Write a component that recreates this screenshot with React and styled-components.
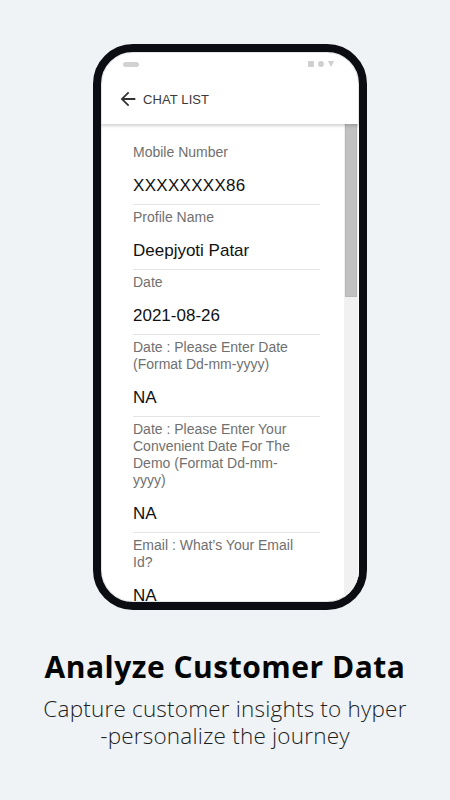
import React from 'react';
import styled, { createGlobalStyle } from 'styled-components';
import { MdArrowBack } from 'react-icons/md';

const fields = [
  { label: 'Mobile Number', value: 'XXXXXXXX86' },
  { label: 'Profile Name', value: 'Deepjyoti Patar' },
  { label: 'Date', value: '2021-08-26' },
  { label: 'Date : Please Enter Date (Format Dd-mm-yyyy)', value: 'NA' },
  { label: 'Date : Please Enter Your Convenient Date For The Demo (Format Dd-mm-yyyy)', value: 'NA' },
  { label: 'Email : What’s Your Email Id?', value: 'NA' },
];

const GlobalStyle = createGlobalStyle`
  html, body {
    margin: 0;
    padding: 0;
    background: #eff3f6;
  }
  body {
    font-family: 'Liberation Sans', Arial, sans-serif;
  }
`;

const Page = styled.div`
  width: 450px;
  height: 800px;
  display: flex;
  flex-direction: column;
  align-items: center;
  background: #eff3f6;
  overflow: hidden;
`;

const Phone = styled.div`
  margin-top: 44px;
  margin-left: 10px;
  width: 258px;
  height: 550px;
  border: 8px solid #0b0d12;
  border-radius: 40px;
  background: #fff;
  overflow: hidden;
  display: flex;
  flex-direction: column;
  box-shadow: inset 0 0 0 1px #e4e4e4;
`;

const StatusBar = styled.div`
  height: 24px;
  flex-shrink: 0;
  display: flex;
  align-items: center;
  justify-content: space-between;
  padding: 0 25px 0 22px;
`;

const Pill = styled.span`
  width: 16px;
  height: 5px;
  border-radius: 3px;
  background: #d2d2d2;
`;

const StatusIcons = styled.div`
  display: flex;
  align-items: center;
  gap: 4px;
`;

const Dot = styled.span`
  width: 6px;
  height: 6px;
  background: #d0d0d0;
  border-radius: ${p => (p.$round ? '50%' : '1px')};
`;

const Tri = styled.span`
  width: 0;
  height: 0;
  border-left: 3px solid transparent;
  border-right: 3px solid transparent;
  border-top: 6px solid #d0d0d0;
`;

const Toolbar = styled.div`
  height: 48px;
  flex-shrink: 0;
  display: flex;
  align-items: center;
  gap: 4px;
  padding-left: 16px;
  padding-bottom: 2px;
  box-sizing: border-box;
  color: #333;
  box-shadow: 0 2px 3px rgba(0, 0, 0, 0.18);
  position: relative;
  z-index: 1;
`;

const Title = styled.span`
  font-size: 13px;
  letter-spacing: 0.1px;
  color: #3a3a3a;
  padding-top: 1px;
`;

const Body = styled.div`
  flex: 1;
  display: flex;
  min-height: 0;
`;

const List = styled.div`
  flex: 1;
  overflow: hidden;
  padding: 16px 24px 0 32px;
`;

const Field = styled.div`
  padding: 4px 0 8px;
  border-bottom: 1px solid #e3e3e3;
`;

const Label = styled.div`
  font-size: 14px;
  line-height: 17px;
  color: #707070;
  padding-right: 14px;
`;

const Value = styled.div`
  margin-top: 15px;
  font-size: 17px;
  line-height: 20px;
  color: #111;
  letter-spacing: ${p => (p.$first ? '0.3px' : '0')};
`;

const Track = styled.div`
  width: 14px;
  flex-shrink: 0;
  background: #f1f1f1;
  border-right: 1px solid #fff;
`;

const Thumb = styled.div`
  height: 172px;
  margin: 0 1px;
  background: #c1c1c1;
  border: 1px solid #b7b7b7;
  border-top: none;
`;

const Caption = styled.div`
  margin-top: 39px;
  text-align: center;
  font-family: 'Open Sans', 'Liberation Sans', sans-serif;
`;

const Heading = styled.h1`
  margin: 0;
  font-size: 30px;
  line-height: 36px;
  font-weight: 700;
  letter-spacing: 0.5px;
  color: #050505;
`;

const Sub = styled.p`
  margin: 10px 0 0;
  font-size: 22.5px;
  line-height: 27px;
  font-weight: 300;
  letter-spacing: 0.2px;
  color: #1e1e1e;
`;

const App = () => {
  return (
    <Page>
      <GlobalStyle />
      <Phone>
        <StatusBar>
          <Pill />
          <StatusIcons>
            <Dot />
            <Dot $round />
            <Tri />
          </StatusIcons>
        </StatusBar>

        <Toolbar>
          <MdArrowBack size={22} />
          <Title>CHAT LIST</Title>
        </Toolbar>

        <Body>
          <List>
            {fields.map((field, i) => (
              <Field key={field.label}>
                <Label>{field.label}</Label>
                <Value $first={i === 0}>{field.value}</Value>
              </Field>
            ))}
          </List>
          <Track>
            <Thumb />
          </Track>
        </Body>
      </Phone>

      <Caption>
        <Heading>Analyze Customer Data</Heading>
        <Sub>
          Capture customer insights to hyper
          <br />
          -personalize the journey
        </Sub>
      </Caption>
    </Page>
  );
};

export default App;
